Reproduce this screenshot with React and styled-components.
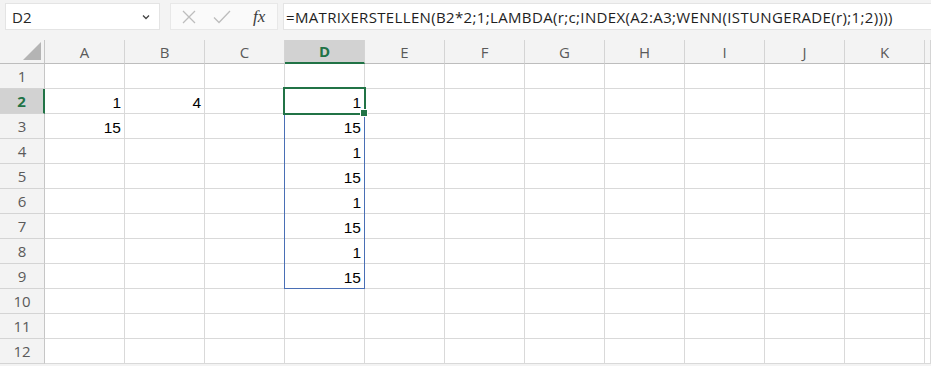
import React from 'react';
import styled, { createGlobalStyle } from 'styled-components';

const GlobalStyle = createGlobalStyle`
  html, body {
    margin: 0;
    padding: 0;
    background: #ffffff;
  }
  body {
    font-family: "Open Sans", "Liberation Sans", sans-serif;
    overflow: hidden;
  }
`;

const COLS = ['A', 'B', 'C', 'D', 'E', 'F', 'G', 'H', 'I', 'J', 'K', ''];
const ROWS = [1, 2, 3, 4, 5, 6, 7, 8, 9, 10, 11, 12];
const GREEN = '#217346';

const values = {
  A2: 1, B2: 4, A3: 15,
  D2: 1, D3: 15, D4: 1, D5: 15, D6: 1, D7: 15, D8: 1, D9: 15,
};

const Page = styled.div`
  width: 931px;
  height: 366px;
  background: #f3f3f3;
  display: flex;
  flex-direction: column;
`;

const FormulaBar = styled.div`
  height: 40px;
  display: flex;
  align-items: flex-start;
  padding-top: 3px;
  box-sizing: border-box;
`;

const NameBox = styled.div`
  width: 155px;
  height: 27px;
  margin-left: 5px;
  background: #fff;
  border: 1px solid #e4e4e4;
  box-sizing: border-box;
  display: flex;
  align-items: center;
  justify-content: space-between;
  padding: 0 8px 0 6px;
  font-size: 15px;
  color: #262626;
`;

const Buttons = styled.div`
  width: 108px;
  height: 27px;
  margin-left: 10px;
  background: #fafafa;
  border: 1px solid #e8e8e8;
  box-sizing: border-box;
  display: flex;
  align-items: center;
  padding-left: 10px;
  gap: 16px;
`;

const Fx = styled.span`
  font-family: "Liberation Serif", serif;
  font-style: italic;
  font-size: 17px;
  color: #3c3c3c;
  margin-left: 6px;
`;

const FormulaInput = styled.div`
  flex: 1;
  height: 27px;
  margin-left: 5px;
  background: #fff;
  border: 1px solid #e4e4e4;
  border-right: none;
  box-sizing: border-box;
  display: flex;
  align-items: center;
  padding-left: 2px;
  font-size: 15px;
  letter-spacing: 0.35px;
  color: #1e1e1e;
  white-space: nowrap;
  overflow: hidden;
`;

const Sheet = styled.div`
  display: grid;
  grid-template-columns: 45px repeat(11, 80px) 1fr;
  grid-template-rows: 24px repeat(12, 25px);
  background: #fff;
`;

const Corner = styled.div`
  background: #f3f3f3;
  border-right: 1px solid #c6c6c6;
  border-bottom: 1px solid #bdbdbd;
  position: relative;
  &::after {
    content: '';
    position: absolute;
    right: 3px;
    bottom: 3px;
    width: 0;
    height: 0;
    border-left: 18px solid transparent;
    border-bottom: 18px solid #b4b4b4;
  }
`;

const ColHead = styled.div`
  background: ${(p) => (p.$active ? '#d2d2d2' : '#f3f3f3')};
  border-right: 1px solid #d4d4d4;
  border-bottom: ${(p) => (p.$active ? `2px solid ${GREEN}` : '1px solid #bdbdbd')};
  display: flex;
  align-items: center;
  justify-content: center;
  font-size: 15px;
  color: ${(p) => (p.$active ? GREEN : '#5a5a5a')};
  font-weight: ${(p) => (p.$active ? 700 : 400)};
  box-sizing: border-box;
`;

const RowHead = styled.div`
  grid-column: 1;
  grid-row: ${(p) => p.$row};
  background: ${(p) => (p.$active ? '#d2d2d2' : '#f3f3f3')};
  border-right: ${(p) => (p.$active ? `2px solid ${GREEN}` : '1px solid #c6c6c6')};
  border-bottom: 1px solid #d4d4d4;
  display: flex;
  align-items: center;
  justify-content: center;
  font-size: 15px;
  color: ${(p) => (p.$active ? GREEN : '#5a5a5a')};
  font-weight: ${(p) => (p.$active ? 700 : 400)};
  box-sizing: border-box;
`;

const Cell = styled.div`
  border-right: 1px solid #d9d9d9;
  border-bottom: 1px solid #d9d9d9;
  box-sizing: border-box;
  display: flex;
  align-items: flex-end;
  justify-content: flex-end;
  padding: 0 3px 1px 0;
  font-family: "Liberation Sans", Arial, sans-serif;
  font-size: 15.5px;
  color: #000;
  grid-column: ${(p) => p.$col};
  grid-row: ${(p) => p.$row};
`;

const SpillRange = styled.div`
  grid-column: 5;
  grid-row: 3 / 11;
  border: 1px solid #4a6fb5;
  margin: -1px 0 0 -1px;
  pointer-events: none;
  z-index: 1;
`;

const ActiveCell = styled.div`
  grid-column: 5;
  grid-row: 3;
  border: 2px solid ${GREEN};
  margin: -2px -1px -1px -2px;
  pointer-events: none;
  position: relative;
  z-index: 2;
`;

const FillHandle = styled.span`
  position: absolute;
  right: -4px;
  bottom: -4px;
  width: 6px;
  height: 6px;
  background: ${GREEN};
  border: 1px solid #fff;
`;

const Chevron = () => (
  <svg width="10" height="10" viewBox="0 0 10 10">
    <path d="M2 3.5 L5 6.5 L8 3.5" fill="none" stroke="#444" strokeWidth="1.3" />
  </svg>
);

const CrossIcon = () => (
  <svg width="16" height="16" viewBox="0 0 16 16">
    <path d="M2 2 L14 14 M14 2 L2 14" stroke="#bdbdbd" strokeWidth="1.3" />
  </svg>
);

const CheckIcon = () => (
  <svg width="18" height="16" viewBox="0 0 18 16">
    <path d="M1 8.5 L6 13.5 L17 2" fill="none" stroke="#bdbdbd" strokeWidth="1.3" />
  </svg>
);

export default function App() {
  return (
    <Page>
      <GlobalStyle />
      <FormulaBar>
        <NameBox>
          <span>D2</span>
          <Chevron />
        </NameBox>
        <Buttons>
          <CrossIcon />
          <CheckIcon />
          <Fx>fx</Fx>
        </Buttons>
        <FormulaInput>=MATRIXERSTELLEN(B2*2;1;LAMBDA(r;c;INDEX(A2:A3;WENN(ISTUNGERADE(r);1;2))))</FormulaInput>
      </FormulaBar>
      <Sheet>
        <Corner />
        {COLS.map((c, i) => (
          <ColHead key={c || 'rest'} $active={c === 'D'}>{c}</ColHead>
        ))}
        {ROWS.map((r) => (
          <React.Fragment key={r}>
            <RowHead $active={r === 2} $row={r + 1}>{r}</RowHead>
            {COLS.map((c, i) => (
              <Cell key={i + '-' + r} $col={i + 2} $row={r + 1}>
                {values[c + r]}
              </Cell>
            ))}
          </React.Fragment>
        ))}
        <SpillRange />
        <ActiveCell>
          <FillHandle />
        </ActiveCell>
      </Sheet>
    </Page>
  );
}
